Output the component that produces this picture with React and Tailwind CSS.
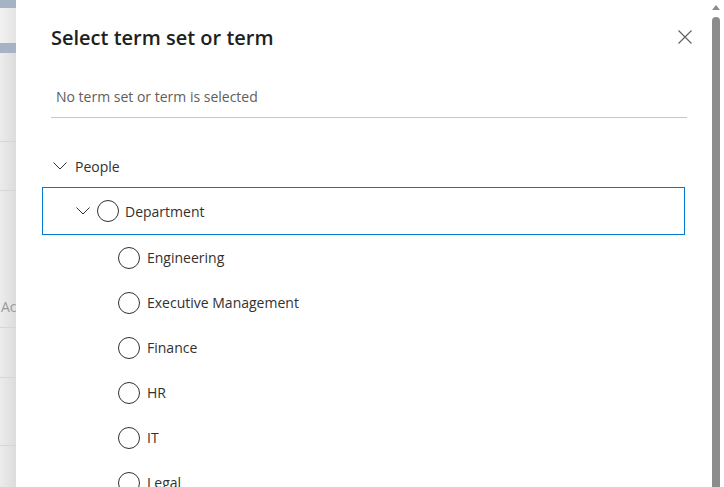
const terms = ["Engineering", "Executive Management", "Finance", "HR", "IT", "Legal"];

function Chevron({ className = "" }) {
  return (
    <svg className={className} width="14" height="8" viewBox="0 0 14 8" fill="none">
      <path d="M0.5 0.5L7 7L13.5 0.5" stroke="#323130" strokeWidth="1" />
    </svg>
  );
}

function Radio() {
  return <span className="h-[22px] w-[22px] shrink-0 rounded-full border border-[#323130]" />;
}

export default function App() {
  return (
    <div
      className="flex h-[487px] w-[724px] overflow-hidden bg-white text-[#323130]"
      style={{ fontFamily: '"Open Sans", "Noto Sans", sans-serif' }}
    >
      {/* page behind the panel */}
      <div className="flex w-[16px] shrink-0 flex-col bg-gradient-to-r from-[#ececec] to-[#dcdcdc]">
        <div className="h-[8px] bg-[#a6b3c4]" />
        <div className="h-[35px] bg-gradient-to-r from-[#f2f2f2] to-[#e4e4e4]" />
        <div className="h-[10px] bg-[#a6b3c4]" />
        <div className="h-[88px]" />
        <div className="h-[49px] border-t border-[#d6d6d6]" />
        <div className="h-[100px] border-t border-[#d6d6d6]" />
        <div className="h-[37px] overflow-hidden pl-[1px] pt-[6px] text-[14px] text-[#9a9a9a]">Ac</div>
        <div className="h-[50px] border-t border-[#d6d6d6]" />
        <div className="h-[68px] border-t border-[#d6d6d6]" />
        <div className="flex-1 border-t border-[#d6d6d6]" />
      </div>

      {/* panel */}
      <div className="flex flex-1">
        <div className="flex-1 pl-[26px] pr-[25px]">
          <div className="mr-[-7px] flex items-start justify-between pl-[9px] pt-[23px]">
            <h1 className="text-[20px] font-semibold leading-[30px] text-[#201f1e]">Select term set or term</h1>
            <svg className="mt-[7px]" width="14" height="14" viewBox="0 0 14 14" fill="none">
              <path d="M0.5 0.5L13.5 13.5M13.5 0.5L0.5 13.5" stroke="#605e5c" strokeWidth="1.1" />
            </svg>
          </div>

          <div className="ml-[9px] mr-[-2px] mt-[34px] border-b border-[#c8c6c4] pb-[10px] pl-[5px] text-[14px] leading-[20px] text-[#605e5c]">
            No term set or term is selected
          </div>

          <div className="mt-[35px] flex h-[26px] items-center gap-[8px] pl-[11px] text-[14px]">
            <Chevron />
            <span>People</span>
          </div>

          <div className="mt-[8px] flex h-[48px] items-center border border-[#0078d4] pl-[33px] text-[14px]">
            <Chevron className="mr-[7px]" />
            <Radio />
            <span className="ml-[6px]">Department</span>
          </div>

          {terms.map((t) => (
            <div key={t} className="flex h-[45px] items-center pl-[76px] text-[14px]">
              <Radio />
              <span className="ml-[7px]">{t}</span>
            </div>
          ))}
        </div>

        {/* scrollbar */}
        <div className="mr-[2px] flex w-[12px] shrink-0 flex-col items-center pt-[5px]">
          <div className="h-0 w-0 border-x-[4px] border-b-[5px] border-x-transparent border-b-[#8c8c8c]" />
          <div className="mt-[7px] w-[8px] flex-1 rounded-t-[4px] bg-[#8c8c8c]" />
        </div>
      </div>
    </div>
  );
}
